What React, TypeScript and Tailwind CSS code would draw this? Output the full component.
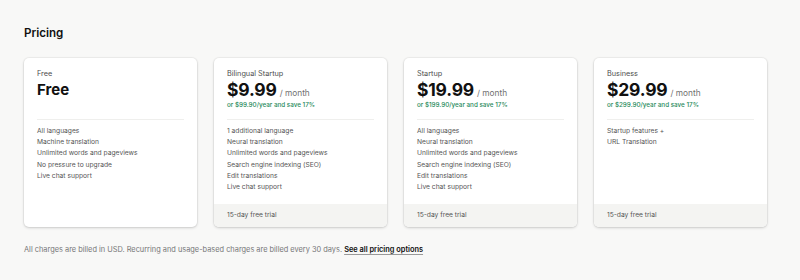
import React from "react";

type Plan = {
  name: string;
  price: string;
  perMonth?: boolean;
  yearly?: string;
  features: string[];
  trial?: string;
};

const plans: Plan[] = [
  {
    name: "Free",
    price: "Free",
    features: [
      "All languages",
      "Machine translation",
      "Unlimited words and pageviews",
      "No pressure to upgrade",
      "Live chat support",
    ],
  },
  {
    name: "Bilingual Startup",
    price: "$9.99",
    perMonth: true,
    yearly: "or $99.90/year and save 17%",
    features: [
      "1 additional language",
      "Neural translation",
      "Unlimited words and pageviews",
      "Search engine indexing (SEO)",
      "Edit translations",
      "Live chat support",
    ],
    trial: "15-day free trial",
  },
  {
    name: "Startup",
    price: "$19.99",
    perMonth: true,
    yearly: "or $199.90/year and save 17%",
    features: [
      "All languages",
      "Neural translation",
      "Unlimited words and pageviews",
      "Search engine indexing (SEO)",
      "Edit translations",
      "Live chat support",
    ],
    trial: "15-day free trial",
  },
  {
    name: "Business",
    price: "$29.99",
    perMonth: true,
    yearly: "or $299.90/year and save 17%",
    features: ["Startup features +", "URL Translation"],
    trial: "15-day free trial",
  },
];

function PlanCard({ plan }: { plan: Plan }) {
  return (
    <div className="flex flex-col bg-white rounded-[5px] shadow-[0_1px_3px_rgba(0,0,0,0.16),0_0_0_1px_rgba(0,0,0,0.035)] overflow-hidden h-[169px]">
      <div className="flex-1 px-[13px] pt-[10px]">
        <div className="text-[7.3px] text-[#4d4d4d] leading-[12px]">{plan.name}</div>
        <div className="flex items-baseline gap-[3px] h-[18px] mt-[1px]">
          <span
            className={
              plan.perMonth
                ? "text-[17.5px] font-bold text-[#111] leading-[18px] tracking-[-0.2px]"
                : "text-[15px] font-bold text-[#111] leading-[18px]"
            }
          >
            {plan.price}
          </span>
          {plan.perMonth && <span className="text-[8.3px] text-[#707070]">/ month</span>}
        </div>
        <div className="text-[6.3px] font-medium text-[#26895a] leading-[12px] h-[12px]">
          {plan.yearly}
        </div>
        <div className="border-t border-[#efefed] mt-[8px]" />
        <ul className="text-[6.7px] text-[#555] leading-[11.2px] mt-[6px]">
          {plan.features.map((f) => (
            <li key={f}>{f}</li>
          ))}
        </ul>
      </div>
      {plan.trial && (
        <div className="bg-[#f4f4f2] h-[23px] px-[13px] flex items-center text-[6.7px] text-[#555]">
          {plan.trial}
        </div>
      )}
    </div>
  );
}

export default function App() {
  return (
    <div
      className="w-[800px] h-[280px] bg-[#f8f8f7] px-6 pt-[25px]"
      style={{ fontFamily: "Inter, 'Noto Sans', sans-serif" }}
    >
      <h1 className="text-[11.6px] font-semibold text-[#111] leading-[16px]">Pricing</h1>
      <div className="grid grid-cols-[173px_173px_173px_173px] gap-[17px] mt-[17px]">
        {plans.map((p) => (
          <PlanCard key={p.name} plan={p} />
        ))}
      </div>
      <p className="mt-[17px] text-[7.4px] leading-[12px] text-[#777]">
        All charges are billed in USD. Recurring and usage-based charges are billed every 30 days.{" "}
        <a className="font-semibold text-[#111] underline underline-offset-2 decoration-[#999]">
          See all pricing options
        </a>
      </p>
    </div>
  );
}
